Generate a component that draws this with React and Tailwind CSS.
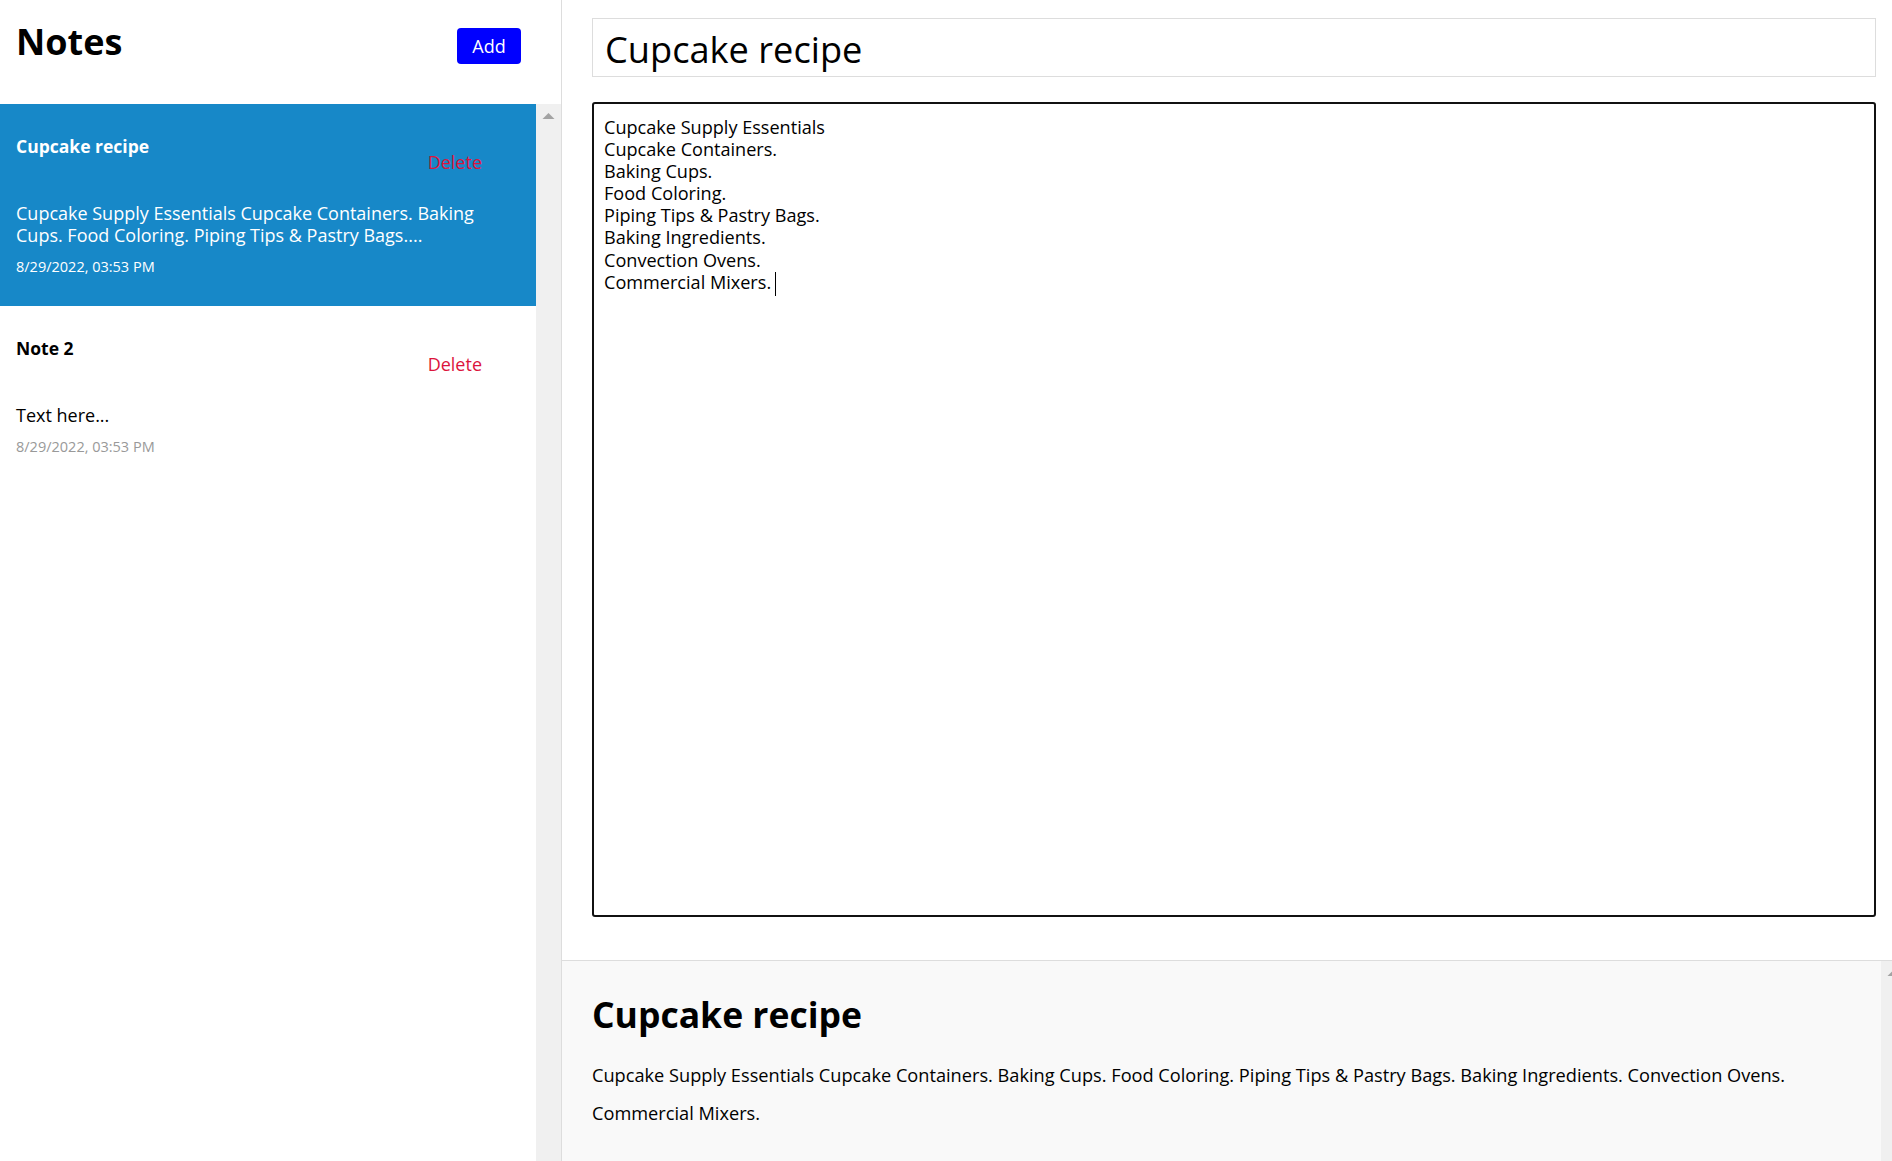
import React from "react";

const notes = [
  {
    id: 1,
    title: "Cupcake recipe",
    preview:
      "Cupcake Supply Essentials Cupcake Containers. Baking Cups. Food Coloring. Piping Tips & Pastry Bags....",
    date: "8/29/2022, 03:53 PM",
    active: true,
  },
  {
    id: 2,
    title: "Note 2",
    preview: "Text here...",
    date: "8/29/2022, 03:53 PM",
    active: false,
  },
];

const bodyLines = [
  "Cupcake Supply Essentials",
  "Cupcake Containers.",
  "Baking Cups.",
  "Food Coloring.",
  "Piping Tips & Pastry Bags.",
  "Baking Ingredients.",
  "Convection Ovens.",
  "Commercial Mixers.",
];

function ArrowUp() {
  return (
    <svg width="25" height="25" viewBox="0 0 25 25" className="shrink-0 block">
      <polygon points="6.5,15 18.5,15 12.5,9" fill="#a3a3a3" />
    </svg>
  );
}

function NoteItem({ note }) {
  return (
    <div
      className={
        note.active
          ? "bg-[#1788c8] text-white pt-[30px] pb-[29px] pl-4 pr-[55px]"
          : "bg-white text-black pt-[30px] pb-[29px] pl-4 pr-[55px]"
      }
    >
      <div className="flex justify-between items-start">
        <strong className="text-[17.5px] leading-6 font-bold">{note.title}</strong>
        <button className="mt-4 text-[18px] leading-6 text-[#dc143c] bg-transparent p-0 mr-[-1px]">
          Delete
        </button>
      </div>
      <p className="mt-[29px] text-[18px] leading-[21.5px]">{note.preview}</p>
      <small
        className={
          note.active
            ? "block mt-[10.5px] text-[14.5px] leading-5 text-white"
            : "block mt-[11px] text-[14.5px] leading-5 text-[#999]"
        }
      >
        {note.date}
      </small>
    </div>
  );
}

export default function App() {
  return (
    <div className="flex h-screen w-full overflow-hidden bg-white text-black font-['Open_Sans',sans-serif]">
      {/* Sidebar */}
      <aside className="w-[562px] shrink-0 border-r border-[#dddddd] flex flex-col">
        <div className="h-[104px] shrink-0 flex justify-between items-start pt-[19.5px] pl-4 pr-10">
          <h1 className="text-[36px] leading-[43px] font-bold">Notes</h1>
          <button className="mt-[8.5px] h-9 w-16 rounded-[4px] bg-[#0000ff] text-white text-[18px] leading-6">
            Add
          </button>
        </div>
        <div className="flex flex-1 min-h-0">
          <div className="w-[536px] shrink-0 overflow-hidden">
            {notes.map((n) => (
              <NoteItem key={n.id} note={n} />
            ))}
          </div>
          <div className="flex-1 bg-[#f0f0f0]">
            <ArrowUp />
          </div>
        </div>
      </aside>

      {/* Main */}
      <main className="flex-1 min-w-0 flex flex-col">
        <div className="h-[960px] shrink-0 pt-[18px] pl-[30px] pr-[16px]">
          <input
            type="text"
            defaultValue="Cupcake recipe"
            className="block w-full h-[59px] border border-[#dddddd] pl-3 pt-[3px] text-[36.2px] text-black outline-none bg-white font-['Open_Sans',sans-serif]"
          />
          <div className="mt-[25px] h-[815px] border-2 border-[#111111] rounded-[3px] pl-[10px] pt-[12px] text-[18.1px] leading-[22.1px] text-black">
            {bodyLines.map((line, i) => (
              <div key={i}>
                {line}
                {i === bodyLines.length - 1 && (
                  <span className="inline-block w-px h-[24px] bg-black align-middle ml-[4px]" />
                )}
              </div>
            ))}
          </div>
        </div>
        <div className="flex-1 min-h-0 flex border-t border-[#dddddd] bg-[#f9f9f9] overflow-hidden">
          <div className="flex-1 min-w-0 pl-[30px] pr-[30px] pt-[32px]">
            <h1 className="text-[35.5px] leading-[42px] font-bold">Cupcake recipe</h1>
            <div className="mt-[21px] text-[18.2px] leading-[38px]">
              Cupcake Supply Essentials Cupcake Containers. Baking Cups. Food Coloring. Piping
              Tips &amp; Pastry Bags. Baking Ingredients. Convection Ovens. Commercial Mixers.
            </div>
          </div>
          <div className="w-[11px] shrink-0 bg-[#f0f0f0] overflow-hidden flex">
            <ArrowUp />
          </div>
        </div>
      </main>
    </div>
  );
}
